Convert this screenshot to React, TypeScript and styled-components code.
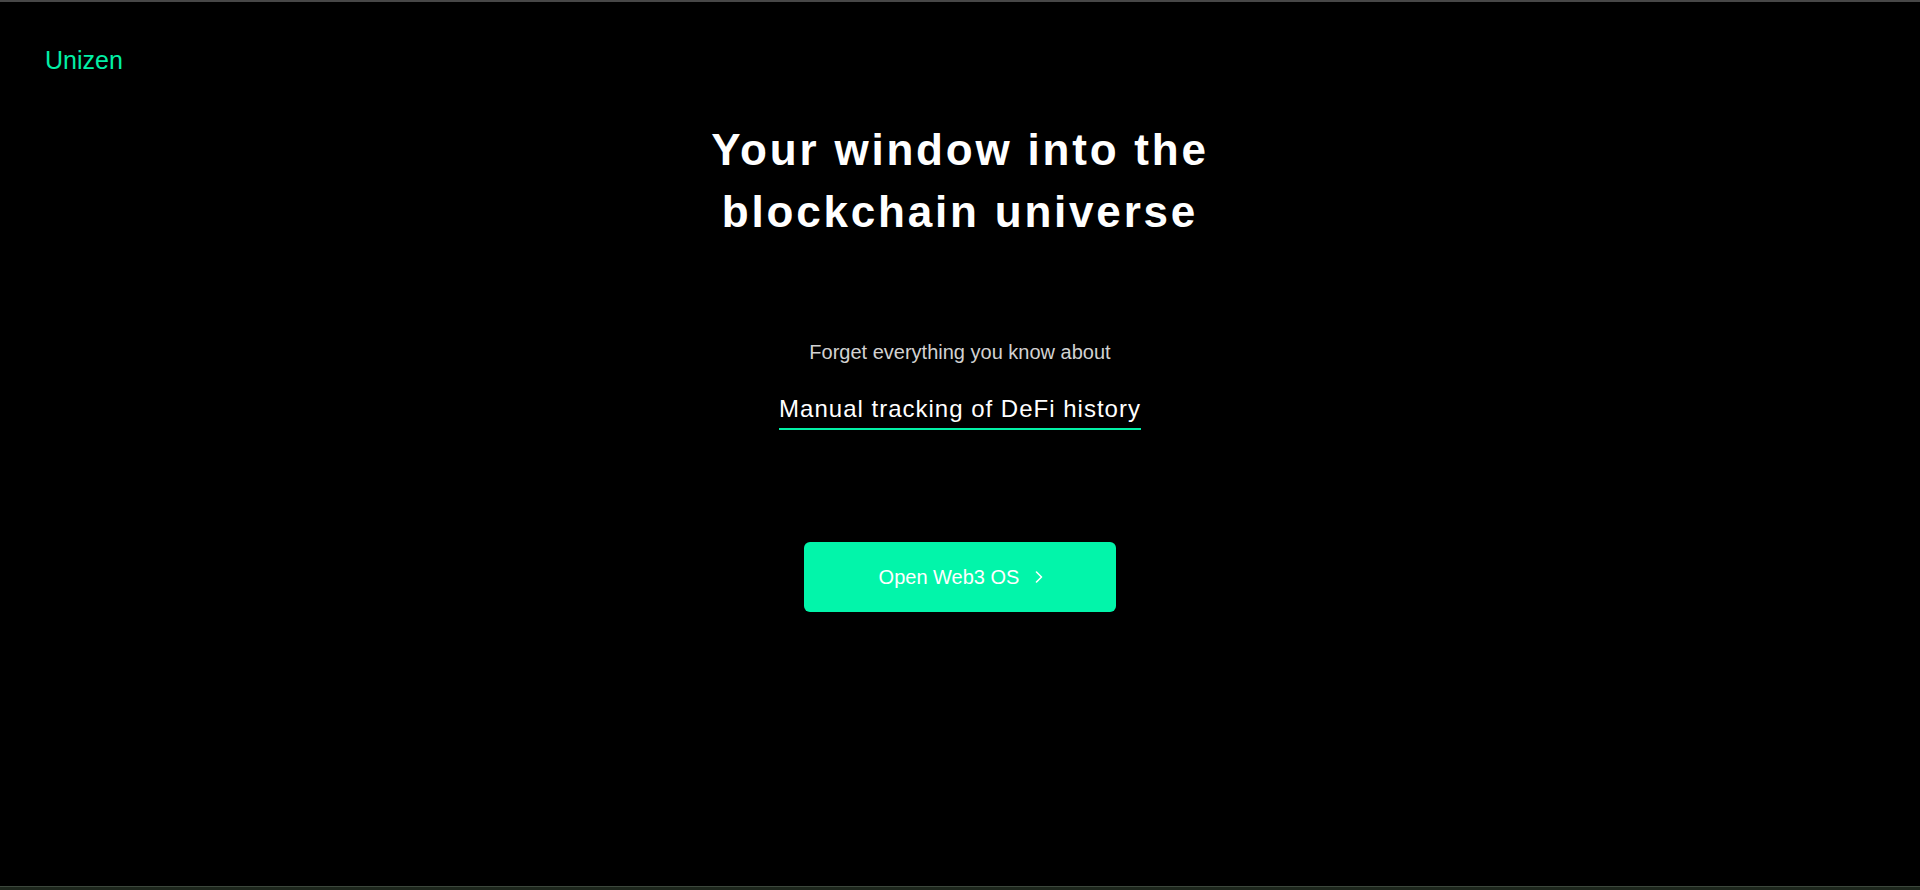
import React from "react";
import styled, { createGlobalStyle } from "styled-components";

const GlobalStyle = createGlobalStyle`
  html, body {
    margin: 0;
    padding: 0;
    background: #000;
  }
  body {
    font-family: "Liberation Sans", Arial, sans-serif;
  }
  * { box-sizing: border-box; }
`;

const Page = styled.div`
  height: 890px;
  display: flex;
  flex-direction: column;
  background: #000;
  border-top: 2px solid #474747;
  overflow: hidden;
`;

const Header = styled.header`
  padding: 44px 0 0 45px;
`;

const Logo = styled.div`
  color: #02f0a6;
  font-size: 25px;
  line-height: 28px;
`;

const Hero = styled.main`
  display: flex;
  flex-direction: column;
  align-items: center;
  text-align: center;
`;

const Title = styled.h1`
  margin: 45px 0 0;
  color: #fff;
  font-size: 44px;
  font-weight: 700;
  line-height: 62px;
  letter-spacing: 2.8px;
`;

const Lead = styled.p`
  margin: 97px 0 0;
  color: #d2d2d2;
  font-size: 20px;
  line-height: 24px;
`;

const Rotating = styled.div`
  margin-top: 31px;
  color: #fff;
  font-size: 24px;
  line-height: 28px;
  letter-spacing: 1px;
  padding-bottom: 5px;
  border-bottom: 2px solid #02f0a6;
`;

const CTA = styled.button`
  margin-top: 112px;
  width: 312px;
  height: 70px;
  border: none;
  border-radius: 6px;
  background: #02f5aa;
  color: #fff;
  font-family: "Liberation Sans", Arial, sans-serif;
  font-size: 20px;
  display: flex;
  align-items: center;
  justify-content: center;
  gap: 16px;
  cursor: pointer;
  padding: 0 0 0 2px;
`;

const Spacer = styled.div`
  flex: 1;
`;

const BottomBar = styled.div`
  height: 4px;
  border-top: 1px solid #3d483d;
  background: #1d271d;
`;

const Chevron = () => (
  <svg width="8" height="12" viewBox="0 0 8 12" fill="none">
    <polyline
      points="1.5,1 6.5,6 1.5,11"
      stroke="#fff"
      strokeWidth="1.6"
      strokeLinecap="round"
      strokeLinejoin="round"
    />
  </svg>
);

export default function App() {
  return (
    <>
      <GlobalStyle />
      <Page>
        <Header>
          <Logo>Unizen</Logo>
        </Header>
        <Hero>
          <Title>
            Your window into the
            <br />
            blockchain universe
          </Title>
          <Lead>Forget everything you know about</Lead>
          <Rotating>Manual tracking of DeFi history</Rotating>
          <CTA>
            <span>Open Web3 OS</span>
            <Chevron />
          </CTA>
        </Hero>
        <Spacer />
        <BottomBar />
      </Page>
    </>
  );
}
